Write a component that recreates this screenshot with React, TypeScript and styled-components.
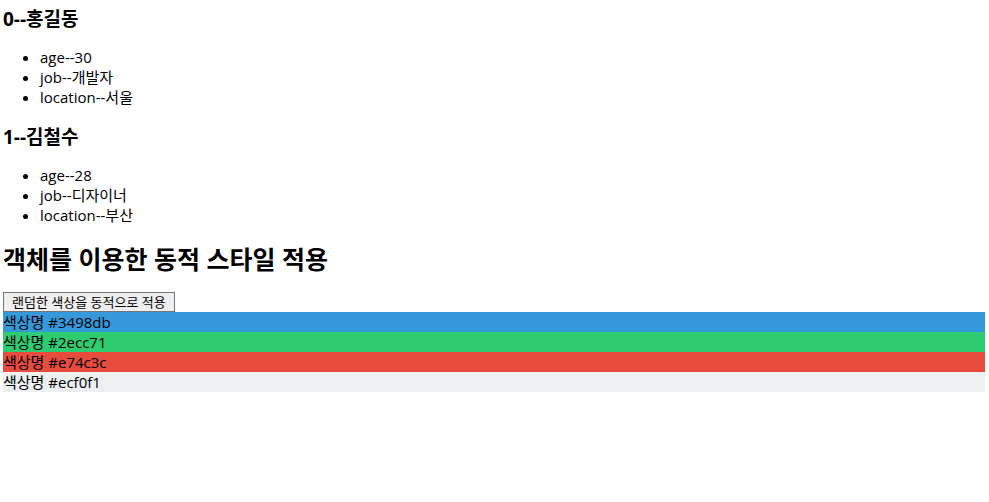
import React, { useState } from 'react';
import styled, { createGlobalStyle } from 'styled-components';

const GlobalStyle = createGlobalStyle`
  body {
    margin: 0;
    background: #ffffff;
    color: #000000;
    font-family: "Open Sans", "Noto Sans CJK KR", sans-serif;
    font-size: 15px;
    line-height: 20px;
  }
`;

const Page = styled.main`
  padding: 8px 4px 8px 3px;
`;

const PersonName = styled.h3`
  margin: 0 0 17px;
  font-size: 19px;
  line-height: 22px;
  font-weight: 700;
`;

const Details = styled.ul`
  margin: 0 0 19px;
  padding-left: 37px;
`;

const Detail = styled.li`
  height: 20px;
`;

const SectionTitle = styled.h2`
  margin: 0 0 18px;
  font-size: 25px;
  line-height: 30px;
  font-weight: 700;
`;

const ApplyButton = styled.button`
  display: block;
  height: 20px;
  padding: 0 8px;
  border: 1px solid #767676;
  border-radius: 0;
  background: #efefef;
  color: #000000;
  font-family: inherit;
  font-size: 13px;
  line-height: 18px;
`;

const ColorRow = styled.div<{ $color: string }>`
  height: 20px;
  background: ${({ $color }) => $color};
`;

const people = [
  { name: '홍길동', age: 30, job: '개발자', location: '서울' },
  { name: '김철수', age: 28, job: '디자이너', location: '부산' },
];

const initialColors = ['#3498db', '#2ecc71', '#e74c3c', '#ecf0f1'];

export default function App() {
  const [colors, setColors] = useState(initialColors);
  const shuffle = () => setColors((list) => [...list].sort(() => Math.random() - 0.5));

  return (
    <>
      <GlobalStyle />
      <Page lang="ko">
        {people.map(({ name, ...details }, index) => (
          <section key={name}>
            <PersonName>{`${index}--${name}`}</PersonName>
            <Details>
              {Object.entries(details).map(([key, value]) => (
                <Detail key={key}>{`${key}--${value}`}</Detail>
              ))}
            </Details>
          </section>
        ))}
        <SectionTitle>객체를 이용한 동적 스타일 적용</SectionTitle>
        <ApplyButton type="button" onClick={shuffle}>랜덤한 색상을 동적으로 적용</ApplyButton>
        {colors.map((color) => (
          <ColorRow key={color} $color={color}>{`색상명 ${color}`}</ColorRow>
        ))}
      </Page>
    </>
  );
}
